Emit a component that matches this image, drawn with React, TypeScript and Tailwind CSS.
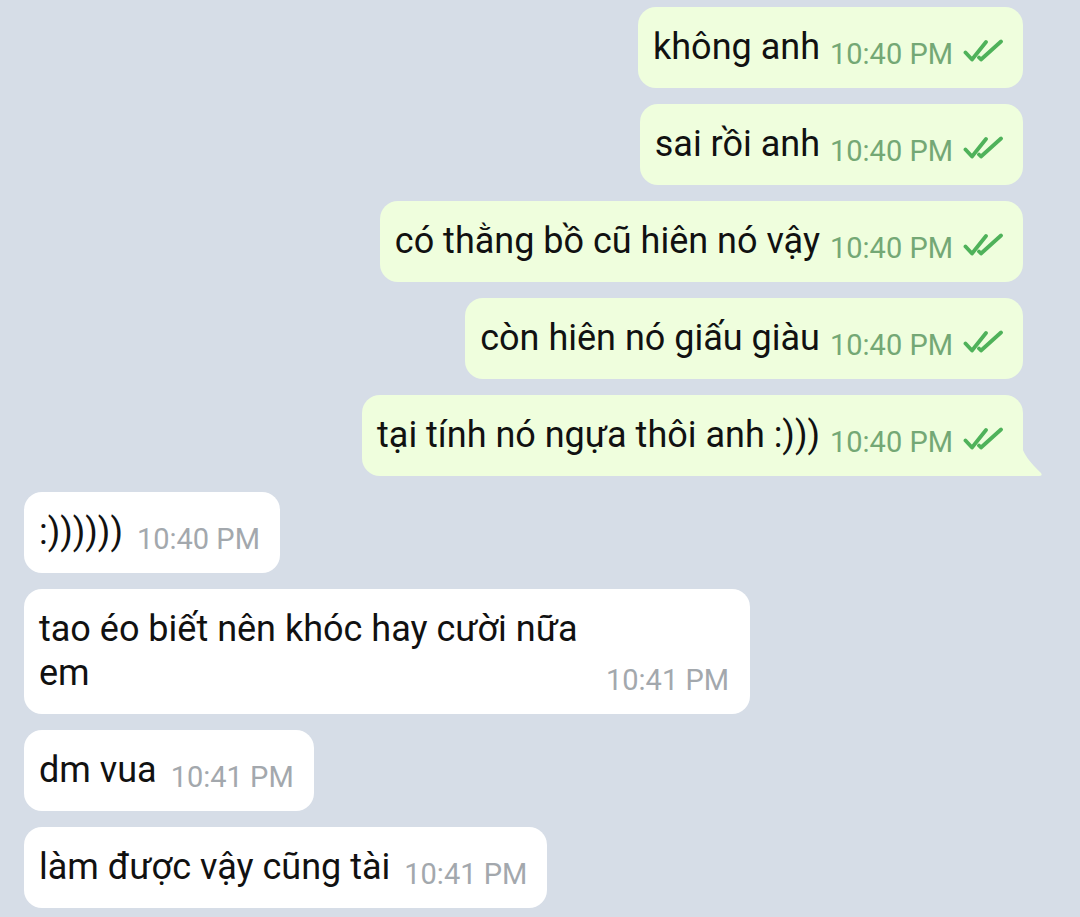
import React from "react";

type Msg = {
  text: string;
  time: string;
  out?: boolean;
  tail?: boolean;
};

const outgoing: Msg[] = [
  { text: "không anh", time: "10:40 PM", out: true },
  { text: "sai rồi anh", time: "10:40 PM", out: true },
  { text: "có thằng bồ cũ hiên nó vậy", time: "10:40 PM", out: true },
  { text: "còn hiên nó giấu giàu", time: "10:40 PM", out: true },
  { text: "tại tính nó ngựa thôi anh :)))", time: "10:40 PM", out: true, tail: true },
];

const ReadCheck = () => (
  <svg
    width="41"
    height="24"
    viewBox="0 0 41 24"
    fill="none"
    stroke="#4fb25a"
    strokeWidth="3.8"
    strokeLinecap="round"
    strokeLinejoin="round"
    className="ml-[10px] relative top-[4px] shrink-0"
  >
    <path d="M2.5 13.5 L9 20.5 L23 3" />
    <path d="M16 18.5 L18 20.5 L38 2.5" />
  </svg>
);

const OutBubble = ({ msg }: { msg: Msg }) => (
  <div className="relative self-end">
    <div
      className={
        "flex items-baseline bg-[#effedd] pl-[15px] pr-[19px] pt-[18px] pb-[19px] " +
        (msg.tail ? "rounded-[18px] rounded-br-none" : "rounded-[18px]")
      }
    >
      <span className="text-[36px] leading-[44px] text-[#111]">{msg.text}</span>
      <span className="ml-[10px] relative top-[5px] text-[29px] leading-none text-[#74a875]">
        {msg.time}
      </span>
      <ReadCheck />
    </div>
    {/* bubble tail */}
    {msg.tail && (
      <svg
        width="21"
        height="30"
        viewBox="0 0 21 30"
        className="absolute -right-[20px] bottom-0"
      >
        <path d="M0 0 Q1 10 19 27 Q21 30 17 30 L0 30 Z" fill="#effedd" />
      </svg>
    )}
  </div>
);

const InBubble = ({ text, time }: { text: string; time: string }) => (
  <div className="self-start flex items-baseline rounded-[18px] bg-white pl-[15px] pr-[20px] pt-[18px] pb-[19px]">
    <span className="text-[36px] leading-[44px] text-[#111]">{text}</span>
    <span className="ml-[14px] relative top-[5px] text-[29px] leading-none text-[#a3a8ad]">
      {time}
    </span>
  </div>
);

export default function App() {
  return (
    <div
      className="w-[1080px] h-[917px] overflow-hidden bg-[#d6dde7] pt-[7px] pl-[24px] pr-[57px]"
      style={{ fontFamily: "Roboto, 'Noto Sans', sans-serif" }}
    >
      <div className="flex flex-col gap-4">
        {outgoing.map((m, i) => (
          <OutBubble key={i} msg={m} />
        ))}

        <InBubble text=":))))))" time="10:40 PM" />

        {/* two-line message */}
        <div className="self-start w-[726px] rounded-[18px] bg-white pl-[15px] pr-[21px] pt-[18px] pb-[19px]">
          <div className="text-[36px] leading-[44px] text-[#111]">
            tao éo biết nên khóc hay cười nữa
          </div>
          <div className="flex items-baseline justify-between">
            <span className="text-[36px] leading-[44px] text-[#111]">em</span>
            <span className="relative top-[5px] text-[29px] leading-none text-[#a3a8ad]">
              10:41 PM
            </span>
          </div>
        </div>

        <InBubble text="dm vua" time="10:41 PM" />
        <InBubble text="làm được vậy cũng tài" time="10:41 PM" />
      </div>
    </div>
  );
}
